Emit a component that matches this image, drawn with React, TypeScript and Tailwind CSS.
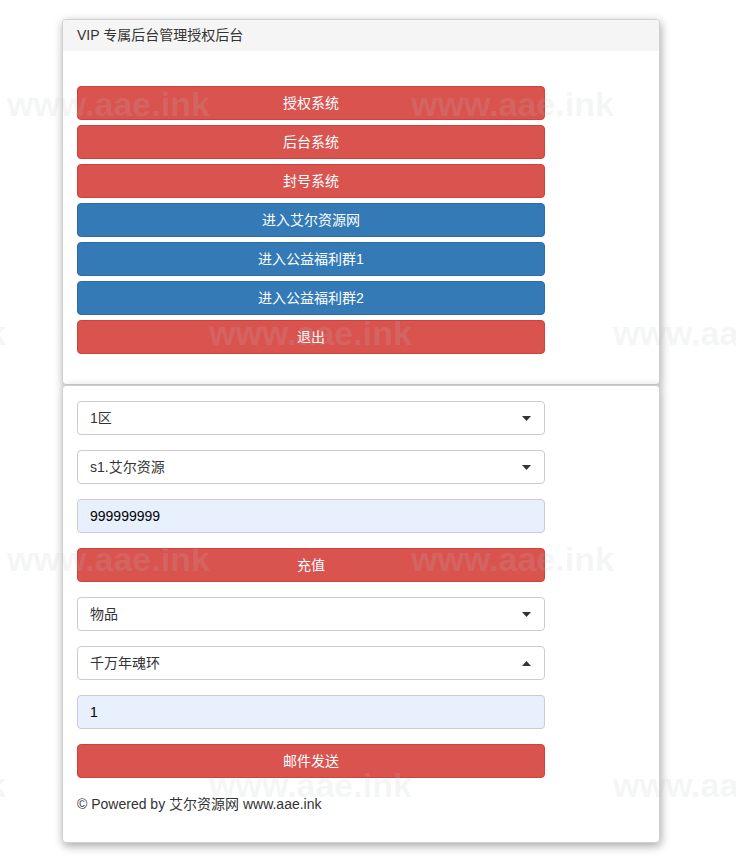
const font = { fontFamily: '"Liberation Sans", "Noto Sans CJK SC", sans-serif' };

const navButtons: { label: string; color: "red" | "blue" }[] = [
  { label: "授权系统", color: "red" },
  { label: "后台系统", color: "red" },
  { label: "封号系统", color: "red" },
  { label: "进入艾尔资源网", color: "blue" },
  { label: "进入公益福利群1", color: "blue" },
  { label: "进入公益福利群2", color: "blue" },
  { label: "退出", color: "red" },
];

function Btn({ label, color }: { label: string; color: "red" | "blue" }) {
  return (
    <button
      className={
        "flex h-[34px] w-[468px] items-center justify-center rounded-[4px] border text-[14px] text-white " +
        (color === "red"
          ? "border-[#d43f3a] bg-[#d9534f]"
          : "border-[#2e6da4] bg-[#337ab7]")
      }
    >
      {label}
    </button>
  );
}

function Select({ value, up }: { value: string; up?: boolean }) {
  return (
    <div className="flex h-[34px] w-[468px] items-center justify-between rounded-[4px] border border-[#ccc] bg-white pl-[12px] pr-[13px] text-[14px] text-[#333]">
      <span>{value}</span>
      <svg width="9" height="5" viewBox="0 0 9 5" className={up ? "rotate-180" : ""}>
        <path d="M0 0h9L4.5 5z" fill="#333" />
      </svg>
    </div>
  );
}

function Input({ value }: { value: string }) {
  return (
    <div className="flex h-[34px] w-[468px] items-center rounded-[4px] border border-[#ccc] bg-[#e8f0fe] pl-[12px] text-[14px] text-black">
      {value}
    </div>
  );
}

// tiled watermark rows
const marks = [
  { top: 87, lefts: [7, 411] },
  { top: 316, lefts: [-197, 209, 613] },
  { top: 542, lefts: [7, 411] },
  { top: 768, lefts: [-197, 209, 613] },
];

export default function App() {
  return (
    <div className="relative min-h-[858px] overflow-hidden bg-white pt-[19px]" style={font}>
      <div className="ml-[62px] w-[598px]">
        <div className="overflow-hidden rounded-[4px] border border-[#d0d0d0] bg-white shadow-[1px_3px_10px_rgba(0,0,0,0.35)]">
          <div className="flex h-[31px] items-center bg-[#f5f5f5] px-[14px] text-[14px] text-[#333]">
            VIP 专属后台管理授权后台
          </div>
          <div className="flex flex-col gap-[5px] px-[14px] pb-[30px] pt-[35px]">
            {navButtons.map((b) => (
              <Btn key={b.label} {...b} />
            ))}
          </div>
        </div>
        <div className="rounded-[4px] border border-[#d0d0d0] bg-white shadow-[1px_3px_10px_rgba(0,0,0,0.35)]">
          <div className="flex flex-col gap-[15px] px-[14px] pt-[15px]">
            <Select value="1区" />
            <Select value="s1.艾尔资源" />
            <Input value="999999999" />
            <Btn label="充值" color="red" />
            <Select value="物品" />
            <Select value="千万年魂环" up />
            <Input value="1" />
            <Btn label="邮件发送" color="red" />
          </div>
          <div className="px-[14px] pb-[28px] pt-[16px] text-[14px] leading-[20px] text-[#333]">
            © Powered by 艾尔资源网 www.aae.ink
          </div>
        </div>
      </div>
      <div className="pointer-events-none absolute inset-0">
        {marks.flatMap((row) =>
          row.lefts.map((l) => (
            <span
              key={`${row.top}-${l}`}
              className="absolute whitespace-nowrap text-[34px] font-bold leading-[34px] text-[rgba(190,195,195,0.16)]"
              style={{ top: row.top, left: l }}
            >
              www.aae.ink
            </span>
          ))
        )}
      </div>
    </div>
  );
}
